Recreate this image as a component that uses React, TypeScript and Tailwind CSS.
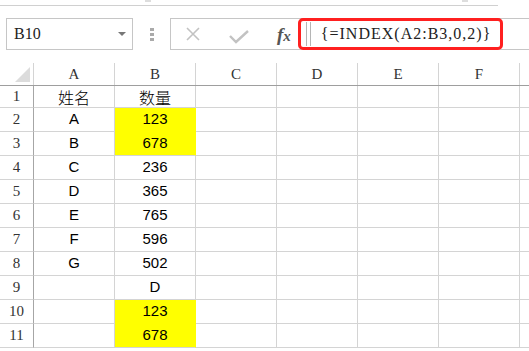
import React from 'react';

const COLS = ['A', 'B', 'C', 'D', 'E', 'F', ''];

type Row = { a?: string; b?: string; yellow?: boolean; yellowJoin?: boolean; cjk?: boolean };

const ROWS: Row[] = [
  { a: '姓名', b: '数量', cjk: true },
  { a: 'A', b: '123', yellow: true, yellowJoin: true },
  { a: 'B', b: '678', yellow: true },
  { a: 'C', b: '236' },
  { a: 'D', b: '365' },
  { a: 'E', b: '765' },
  { a: 'F', b: '596' },
  { a: 'G', b: '502' },
  { b: 'D' },
  { b: '123', yellow: true, yellowJoin: true },
  { b: '678', yellow: true },
];

const serif = "font-['Liberation_Serif','Noto_Sans_CJK_SC',serif]";
const sans = "font-['Liberation_Sans',Arial,sans-serif]";
const cjk = "font-['Noto_Sans_CJK_SC',sans-serif] font-light";

const Toolbar = () => (
  <div className="flex h-[32px] items-stretch">
    <div className="ml-[6px] flex w-[127px] items-center justify-between border border-[#c6c6c6] pl-[7px] pr-[6px]">
      <span className={`${serif} text-[16px] text-[#222]`}>B10</span>
      <span className="h-0 w-0 border-x-[4px] border-t-[4px] border-x-transparent border-t-[#777]" />
    </div>
    <div className="ml-[16px] flex w-[5px] flex-col items-center justify-center gap-[2px]">
      <span className="h-[3px] w-[4px] bg-[#aaa]" />
      <span className="h-[3px] w-[4px] bg-[#aaa]" />
      <span className="h-[3px] w-[4px] bg-[#aaa]" />
    </div>
    <div className="ml-[16px] flex flex-1 items-center border-y border-l border-[#c6c6c6]">
      <svg width="16" height="16" viewBox="0 0 16 16" className="ml-[14px]">
        <path d="M2 2 L14 14 M14 2 L2 14" stroke="#c2c2c2" strokeWidth="1.6" fill="none" />
      </svg>
      <svg width="20" height="14" viewBox="0 0 20 14" className="ml-[28px] mt-[6px]">
        <path d="M1 6 L7 12 L19 1" stroke="#c2c2c2" strokeWidth="2.4" fill="none" />
      </svg>
      <span className={`${serif} ml-[28px] text-[19px] font-bold italic text-[#555] leading-none`}>
        f<span className="text-[15px]">x</span>
      </span>
      <div className="-my-px ml-[7px] flex h-[32px] w-[205px] items-center rounded-[5px] border-[3px] border-[#ff2020]">
        <span className="ml-[5px] h-[24px] w-[1px] bg-[#b5b5b5]" />
        <span className="ml-[3px] h-[24px] w-[1px] bg-[#b5b5b5]" />
        <span className={`${serif} ml-[10px] text-[16px] tracking-[1px] text-[#222]`}>
          {'{=INDEX(A2:B3,0,2)}'}
        </span>
      </div>
    </div>
  </div>
);

const Grid = () => (
  <div className="flex flex-col">
    <div className="flex h-[23px] border-b border-[#9e9e9e]">
      <div className="relative w-[34px] shrink-0 border-r border-[#d4d4d4]">
        <span className="absolute left-[15px] top-[4px] h-0 w-0 border-b-[15px] border-l-[15px] border-b-[#dcdcdc] border-l-transparent" />
      </div>
      {COLS.map((c, i) => (
        <div
          key={i}
          className={`${serif} flex w-[81px] shrink-0 items-center justify-center border-r border-[#d4d4d4] text-[15px] text-[#333]`}
        >
          {c}
        </div>
      ))}
    </div>
    {ROWS.map((r, i) => (
      <div key={i} className={`flex ${i === 0 ? 'h-[22px]' : 'h-[24px]'}`}>
        <div
          className={`${serif} flex w-[34px] shrink-0 items-center justify-center border-r border-b border-r-[#a6a6a6] border-b-[#d4d4d4] text-[15px] text-[#333]`}
        >
          {i + 1}
        </div>
        <div
          className={`${r.cjk ? cjk + ' text-[16px]' : sans + ' text-[15px]'} flex w-[81px] shrink-0 items-center justify-center border-r border-b border-[#d4d4d4] text-black`}
        >
          {r.a}
        </div>
        <div
          className={`${r.cjk ? cjk + ' text-[16px]' : sans + ' text-[15px]'} flex w-[81px] shrink-0 items-center justify-center border-r border-b text-black ${
            r.yellow
              ? r.yellowJoin
                ? 'bg-[#ffff00] border-[#ffff00]'
                : 'bg-[#ffff00] border-r-[#ffff00] border-b-[#d4d4d4]'
              : 'border-[#d4d4d4]'
          }`}
        >
          {r.b}
        </div>
        {COLS.slice(2).map((_, j) => (
          <div key={j} className="w-[81px] shrink-0 border-r border-b border-[#d4d4d4]" />
        ))}
      </div>
    ))}
  </div>
);

export default function App() {
  return (
    <div className="relative h-[351px] w-[529px] overflow-hidden bg-white">
      <div className="h-[18px]">
        <div className="h-[6px] w-[498px] border-b border-[#d0d0d0]" />
        <span className="absolute left-[145px] top-0 h-[2px] w-[6px] bg-[#dddddd]" />
        <span className="absolute left-[462px] top-0 h-[2px] w-[6px] bg-[#dddddd]" />
      </div>
      <Toolbar />
      <div className="h-[13px]" />
      <Grid />
    </div>
  );
}
